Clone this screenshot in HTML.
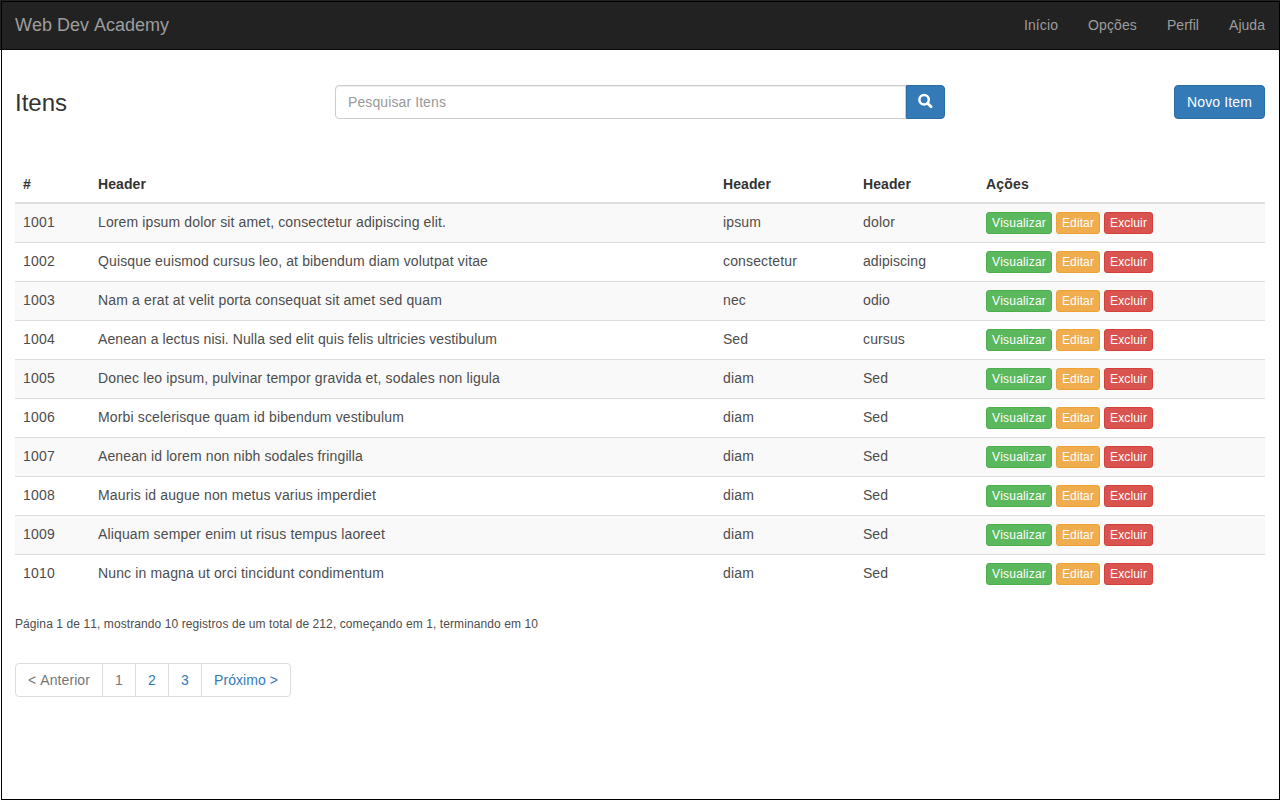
<!DOCTYPE html>
<html>
<head>
<meta charset="utf-8">
<title>Itens</title>
<style>
*{box-sizing:border-box;}
html,body{margin:0;padding:0;}
body{width:1280px;height:800px;overflow:hidden;position:relative;background:#fff;
  font-family:"Liberation Sans",sans-serif;font-size:14px;line-height:20px;color:#333;font-kerning:none;font-variant-ligatures:none;}
.frame{position:absolute;left:1px;top:1px;width:1279px;height:799px;border:1px solid #000;z-index:10;pointer-events:none;}
.navbar{position:absolute;left:0;top:0;width:1280px;height:50px;background:#222;border-bottom:1px solid #080808;}
.brand{position:absolute;left:15px;top:15px;font-size:18px;line-height:20px;color:#9d9d9d;white-space:nowrap;}
.nav{position:absolute;top:15px;line-height:20px;color:#9d9d9d;white-space:nowrap;}
h3{position:absolute;left:15px;top:90px;margin:0;font-size:24px;line-height:26.4px;font-weight:normal;color:#333;white-space:nowrap;}
.search{position:absolute;left:335px;top:85px;width:571px;height:34px;border:1px solid #ccc;border-radius:4px 0 0 4px;
  box-shadow:inset 0 1px 1px rgba(0,0,0,.075);padding:6px 12px;color:#999;white-space:nowrap;}
.sbtn{position:absolute;left:906px;top:85px;width:39px;height:34px;background:#337ab7;border:1px solid #2e6da4;border-radius:0 4px 4px 0;}
.sbtn svg{display:block;}
.novo{position:absolute;left:1174px;top:85px;width:91px;height:34px;background:#337ab7;border:1px solid #2e6da4;border-radius:4px;color:#fff;
  padding:6px 12px;white-space:nowrap;}
table{position:absolute;left:15px;top:166px;width:1250px;border-collapse:collapse;border-spacing:0;table-layout:fixed;}
th{text-align:left;font-weight:bold;padding:8px;line-height:20px;border-bottom:2px solid #ddd;vertical-align:bottom;white-space:nowrap;}
td{color:#4d4d4d;padding:8px;line-height:20px;border-top:1px solid #ddd;vertical-align:top;height:39px;white-space:nowrap;}
tbody tr:nth-child(odd){background:#f9f9f9;}
tbody tr:first-child td{border-top:0;}
.b{display:inline-block;vertical-align:top;height:22px;padding:1px 5px;font-size:12px;line-height:18px;border:1px solid transparent;border-radius:3px;color:#fff;margin-right:4px;}
.bs{background:#5cb85c;border-color:#4cae4c;}
.bw{background:#f0ad4e;border-color:#eea236;}
.bd{background:#d9534f;border-color:#d43f3a;}
.info{position:absolute;left:15px;top:614px;font-size:12px;line-height:20px;color:#4d4d4d;white-space:nowrap;}
.pag{position:absolute;left:15px;top:663px;display:flex;}
.pag span{display:block;}
.pag > span{height:34px;padding:6px 12px;line-height:20px;border:1px solid #ddd;margin-left:-1px;color:#337ab7;background:#fff;}
.pag > span:first-child{margin-left:0;border-radius:4px 0 0 4px;}
.pag > span:last-child{border-radius:0 4px 4px 0;}
.pag > .dis{color:#777;}
</style>
</head>
<body>
<div class="navbar">
<div class="brand"><span style="letter-spacing:-0.004px">Web Dev Academy</span></div>
<div class="nav" style="left:1024px"><span style="letter-spacing:0.090px">Início</span></div>
<div class="nav" style="left:1088px"><span style="letter-spacing:0.125px">Opções</span></div>
<div class="nav" style="left:1167px"><span style="letter-spacing:0.017px">Perfil</span></div>
<div class="nav" style="left:1229px"><span style="letter-spacing:0.039px">Ajuda</span></div>
</div>
<h3><span style="letter-spacing:-0.006px">Itens</span></h3>
<div class="search"><span style="letter-spacing:0.100px">Pesquisar Itens</span></div>
<div class="sbtn"><svg width="37" height="32" viewBox="0 0 37 32"><circle cx="17.1" cy="13.8" r="4.7" fill="none" stroke="#fff" stroke-width="2.5"/><path d="M20.5 17.2 L24.1 20.8" stroke="#fff" stroke-width="2.8" stroke-linecap="round"/></svg></div>
<div class="novo"><span style="letter-spacing:0.133px">Novo Item</span></div>
<table>
<colgroup><col style="width:75px"><col style="width:625px"><col style="width:140px"><col style="width:123px"><col style="width:287px"></colgroup>
<thead><tr><th><span style="letter-spacing:0.214px">#</span></th><th><span style="letter-spacing:0.089px">Header</span></th><th><span style="letter-spacing:0.089px">Header</span></th><th><span style="letter-spacing:0.089px">Header</span></th><th><span style="letter-spacing:0.196px">Ações</span></th></tr></thead>
<tbody>
<tr><td><span style="letter-spacing:0.214px">1001</span></td><td><span style="letter-spacing:0.128px">Lorem ipsum dolor sit amet, consectetur adipiscing elit.</span></td><td><span style="letter-spacing:0.131px">ipsum</span></td><td><span style="letter-spacing:0.174px">dolor</span></td><td><span class="b bs"><span style="letter-spacing:0.198px">Visualizar</span></span><span class="b bw"><span style="letter-spacing:0.109px">Editar</span></span><span class="b bd"><span style="letter-spacing:0.142px">Excluir</span></span></td></tr>
<tr><td><span style="letter-spacing:0.214px">1002</span></td><td><span style="letter-spacing:0.134px">Quisque euismod cursus leo, at bibendum diam volutpat vitae</span></td><td><span style="letter-spacing:0.148px">consectetur</span></td><td><span style="letter-spacing:0.074px">adipiscing</span></td><td><span class="b bs"><span style="letter-spacing:0.198px">Visualizar</span></span><span class="b bw"><span style="letter-spacing:0.109px">Editar</span></span><span class="b bd"><span style="letter-spacing:0.142px">Excluir</span></span></td></tr>
<tr><td><span style="letter-spacing:0.214px">1003</span></td><td><span style="letter-spacing:0.148px">Nam a erat at velit porta consequat sit amet sed quam</span></td><td><span style="letter-spacing:0.143px">nec</span></td><td><span style="letter-spacing:0.133px">odio</span></td><td><span class="b bs"><span style="letter-spacing:0.198px">Visualizar</span></span><span class="b bw"><span style="letter-spacing:0.109px">Editar</span></span><span class="b bd"><span style="letter-spacing:0.142px">Excluir</span></span></td></tr>
<tr><td><span style="letter-spacing:0.214px">1004</span></td><td><span style="letter-spacing:0.077px">Aenean a lectus nisi. Nulla sed elit quis felis ultricies vestibulum</span></td><td><span style="letter-spacing:0.030px">Sed</span></td><td><span style="letter-spacing:0.128px">cursus</span></td><td><span class="b bs"><span style="letter-spacing:0.198px">Visualizar</span></span><span class="b bw"><span style="letter-spacing:0.109px">Editar</span></span><span class="b bd"><span style="letter-spacing:0.142px">Excluir</span></span></td></tr>
<tr><td><span style="letter-spacing:0.214px">1005</span></td><td><span style="letter-spacing:0.131px">Donec leo ipsum, pulvinar tempor gravida et, sodales non ligula</span></td><td><span style="letter-spacing:0.164px">diam</span></td><td><span style="letter-spacing:0.030px">Sed</span></td><td><span class="b bs"><span style="letter-spacing:0.198px">Visualizar</span></span><span class="b bw"><span style="letter-spacing:0.109px">Editar</span></span><span class="b bd"><span style="letter-spacing:0.142px">Excluir</span></span></td></tr>
<tr><td><span style="letter-spacing:0.214px">1006</span></td><td><span style="letter-spacing:0.142px">Morbi scelerisque quam id bibendum vestibulum</span></td><td><span style="letter-spacing:0.164px">diam</span></td><td><span style="letter-spacing:0.030px">Sed</span></td><td><span class="b bs"><span style="letter-spacing:0.198px">Visualizar</span></span><span class="b bw"><span style="letter-spacing:0.109px">Editar</span></span><span class="b bd"><span style="letter-spacing:0.142px">Excluir</span></span></td></tr>
<tr><td><span style="letter-spacing:0.214px">1007</span></td><td><span style="letter-spacing:0.120px">Aenean id lorem non nibh sodales fringilla</span></td><td><span style="letter-spacing:0.164px">diam</span></td><td><span style="letter-spacing:0.030px">Sed</span></td><td><span class="b bs"><span style="letter-spacing:0.198px">Visualizar</span></span><span class="b bw"><span style="letter-spacing:0.109px">Editar</span></span><span class="b bd"><span style="letter-spacing:0.142px">Excluir</span></span></td></tr>
<tr><td><span style="letter-spacing:0.214px">1008</span></td><td><span style="letter-spacing:0.153px">Mauris id augue non metus varius imperdiet</span></td><td><span style="letter-spacing:0.164px">diam</span></td><td><span style="letter-spacing:0.030px">Sed</span></td><td><span class="b bs"><span style="letter-spacing:0.198px">Visualizar</span></span><span class="b bw"><span style="letter-spacing:0.109px">Editar</span></span><span class="b bd"><span style="letter-spacing:0.142px">Excluir</span></span></td></tr>
<tr><td><span style="letter-spacing:0.214px">1009</span></td><td><span style="letter-spacing:0.142px">Aliquam semper enim ut risus tempus laoreet</span></td><td><span style="letter-spacing:0.164px">diam</span></td><td><span style="letter-spacing:0.030px">Sed</span></td><td><span class="b bs"><span style="letter-spacing:0.198px">Visualizar</span></span><span class="b bw"><span style="letter-spacing:0.109px">Editar</span></span><span class="b bd"><span style="letter-spacing:0.142px">Excluir</span></span></td></tr>
<tr><td><span style="letter-spacing:0.214px">1010</span></td><td><span style="letter-spacing:0.136px">Nunc in magna ut orci tincidunt condimentum</span></td><td><span style="letter-spacing:0.164px">diam</span></td><td><span style="letter-spacing:0.030px">Sed</span></td><td><span class="b bs"><span style="letter-spacing:0.198px">Visualizar</span></span><span class="b bw"><span style="letter-spacing:0.109px">Editar</span></span><span class="b bd"><span style="letter-spacing:0.142px">Excluir</span></span></td></tr>
</tbody>
</table>
<div class="info"><span style="letter-spacing:0.088px">Página 1 de 11, mostrando 10 registros de um total de 212, começando em 1, terminando em 10</span></div>
<div class="pag"><span class="dis"><span style="letter-spacing:0.091px">&lt; Anterior</span></span><span class="dis"><span style="letter-spacing:0.214px">1</span></span><span><span style="letter-spacing:0.214px">2</span></span><span><span style="letter-spacing:0.214px">3</span></span><span><span style="letter-spacing:0.066px">Próximo &gt;</span></span></div>
<div class="frame"></div>
</body>
</html>
